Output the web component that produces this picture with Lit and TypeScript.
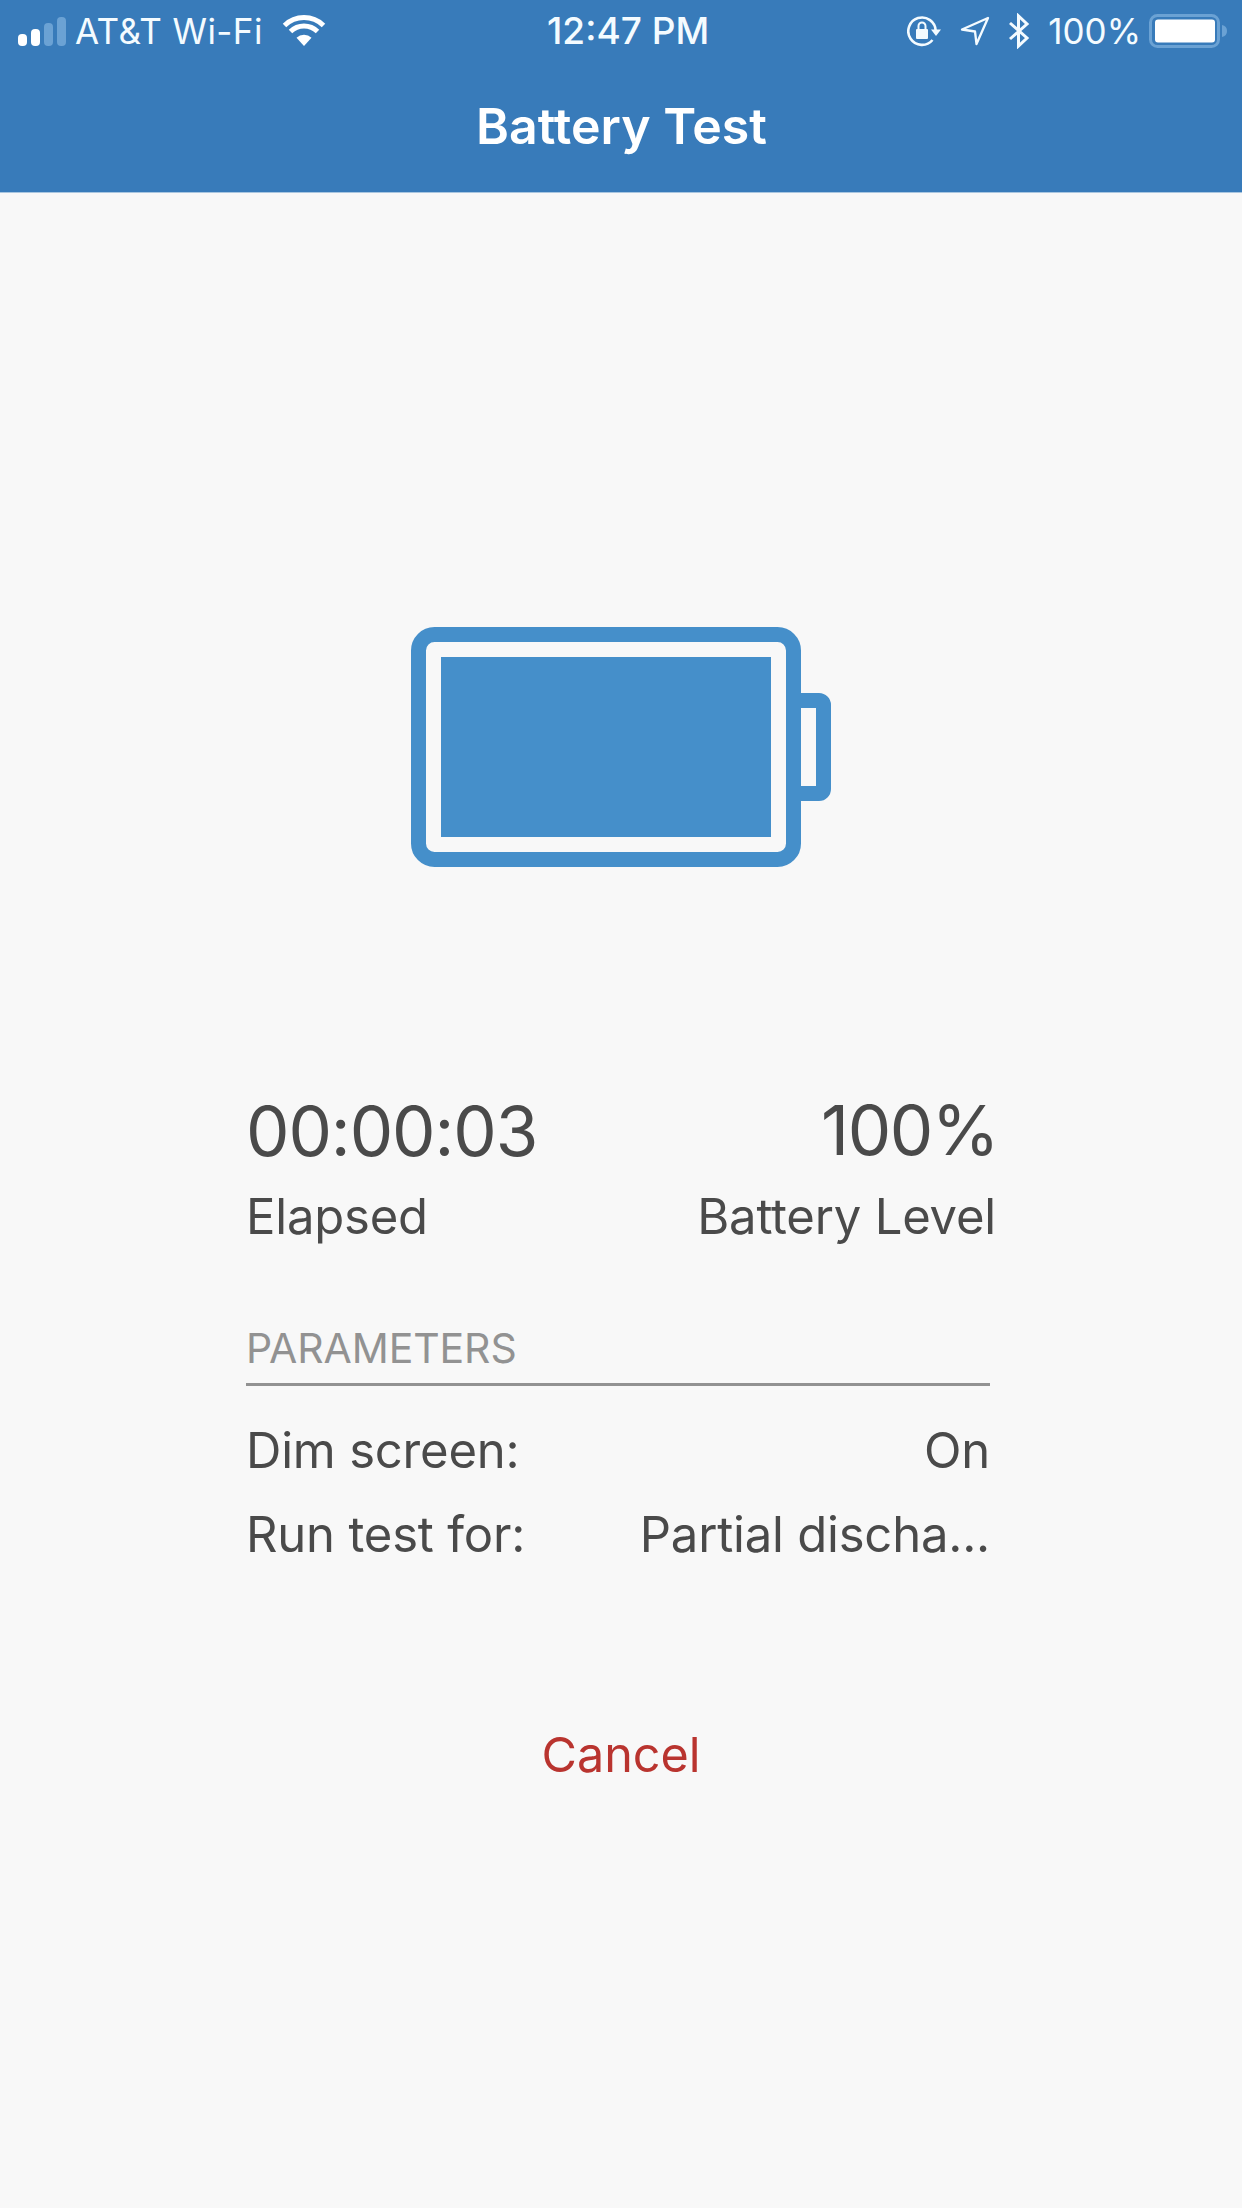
import { LitElement, html, css } from "lit";
import { customElement } from "lit/decorators.js";

@customElement("app-root")
export class AppRoot extends LitElement {
  static styles = css`
    :host { display: block; width: 1242px; height: 2208px; background: #f8f8f8; font-family: Inter, "Liberation Sans", sans-serif; color: #4a4a4a; overflow: hidden; }
    .header { height: 193px; box-sizing: border-box; background: #387bba; border-bottom: 1px solid #a9c6e0; color: #fff; padding: 0 15px 0 18px; display: flex; flex-direction: column; }
    .status { height: 62px; display: flex; align-items: center; position: relative; font-size: 35px; font-weight: 400; color: #f4fbff; }
    .left { display: flex; align-items: center; }
    .signal { display: flex; align-items: flex-end; gap: 4px; height: 29px; margin-right: 9px; }
    .signal i { display: block; width: 9px; border-radius: 4px; background: #fff; }
    .signal i.dim { background: #6ba2d4; }
    .carrier { letter-spacing: 0.4px; margin-right: 19px; }
    .clock { position: absolute; left: 529px; top: 0; line-height: 62px; font-weight: 500; font-size: 37px; }
    .right { margin-left: auto; display: flex; align-items: center; }
    .pct { margin: 0 8px 0 18px; }
    .title { font-size: 50px; font-weight: 600; text-align: center; line-height: 128px; margin-left: -2px; }
    .hero { display: flex; justify-content: flex-start; padding: 434px 0 0 411px; }
    .hero svg { display: block; }
    .stats { padding: 0 246px; margin-top: 227px; }
    .row { display: flex; justify-content: space-between; }
    .big { font-size: 69px; font-weight: 400; line-height: 80px; letter-spacing: -1.1px; margin-top: -3px; }
    .big.pct2 { margin-top: -4px; letter-spacing: -1.5px; margin-right: -2px; }
    .label { font-size: 49px; font-weight: 400; line-height: 58px; margin-top: 17px; letter-spacing: -0.2px; }
    .label.end { margin-top: 18px; }
    .cell-end { text-align: right; }
    .params { padding: 0 0 0 246px; width: 744px; margin-top: 77px; }
    .ph { font-size: 41px; font-weight: 400; color: #929292; line-height: 50px; padding-bottom: 10px; border-bottom: 3px solid #929292; letter-spacing: -0.1px; }
    .p { display: flex; justify-content: space-between; font-size: 49px; font-weight: 400; line-height: 84px; white-space: nowrap; letter-spacing: -0.2px; }
    .p.first { margin-top: 23px; }
    .cancel { text-align: center; font-size: 48.5px; font-weight: 400; color: #b9342f; line-height: 60px; margin-top: 148px; }
  `;
  render() {
    return html`
      <div class="header">
        <div class="status">
          <div class="left">
            <div class="signal">
              <i style="height:12px"></i><i style="height:17px"></i><i class="dim" style="height:23px"></i><i class="dim" style="height:29px"></i>
            </div>
            <span class="carrier">AT&amp;T Wi-Fi</span>
            <svg width="44" height="32" viewBox="0 0 44 32"><path d="M22 31 L14.5 22.8 A11 11 0 0 1 29.5 22.8 Z" fill="#fff"/><path d="M8.5 16.5 A19.5 19.5 0 0 1 35.5 16.5" fill="none" stroke="#fff" stroke-width="5"/><path d="M2.5 10.5 A28 28 0 0 1 41.5 10.5" fill="none" stroke="#fff" stroke-width="5"/></svg>
          </div>
          <span class="clock">12:47 PM</span>
          <div class="right">
            <svg width="36" height="32" viewBox="0 0 36 32"><path d="M25.5 25 A13.7 13.7 0 1 1 28.7 16" fill="none" stroke="#f4fbff" stroke-width="2.6"/><path d="M24 14.5 L34 14.5 L29 21 Z" fill="#f4fbff"/><rect x="9" y="14" width="12" height="10" rx="1" fill="#f4fbff"/><path d="M11.5 14 V11 a3.5 3.5 0 0 1 7 0 V14" fill="none" stroke="#f4fbff" stroke-width="2"/></svg>
            <svg style="margin-left:17px" width="30" height="30" viewBox="0 0 30 30"><path d="M28 2 L2 13.5 L15 15.5 L16.5 28 Z" fill="none" stroke="#f4fbff" stroke-width="2.3" stroke-linejoin="round"/></svg>
            <svg style="margin-left:18px" width="22" height="36" viewBox="0 0 22 36"><path d="M2 10 L19 25 L10.5 33 V3 L19 11 L2 26" fill="none" stroke="#f4fbff" stroke-width="3"/></svg>
            <span class="pct">100%</span>
            <svg width="78" height="34" viewBox="0 0 78 34"><rect x="1.5" y="1.5" width="68" height="31" rx="7" fill="none" stroke="#6ba2d4" stroke-width="3"/><rect x="6" y="5.5" width="60" height="23" rx="3" fill="#fff"/><path d="M73 11 q5 1 5 6 t-5 6 Z" fill="#6ba2d4"/></svg>
          </div>
        </div>
        <div class="title">Battery Test</div>
      </div>
      <div class="hero">
        <svg width="420" height="240" viewBox="0 0 420 240">
          <rect x="7.5" y="7.5" width="375" height="225" rx="16" fill="none" stroke="#458fca" stroke-width="15"/>
          <rect x="30" y="30" width="330" height="180" fill="#458fca"/>
          <path fill-rule="evenodd" d="M388 66 H408 a12 12 0 0 1 12 12 V162 a12 12 0 0 1 -12 12 H388 Z M390 81 V159 H405 V81 Z" fill="#458fca"/>
        </svg>
      </div>
      <div class="stats">
        <div class="row">
          <div>
            <div class="big">00:00:03</div>
            <div class="label">Elapsed</div>
          </div>
          <div class="cell-end">
            <div class="big pct2">100%</div>
            <div class="label end">Battery Level</div>
          </div>
        </div>
      </div>
      <div class="params">
        <div class="ph">PARAMETERS</div>
        <div class="p first"><span>Dim screen:</span><span>On</span></div>
        <div class="p"><span>Run test for:</span><span>Partial discha...</span></div>
      </div>
      <div class="cancel">Cancel</div>
    `;
  }
}
